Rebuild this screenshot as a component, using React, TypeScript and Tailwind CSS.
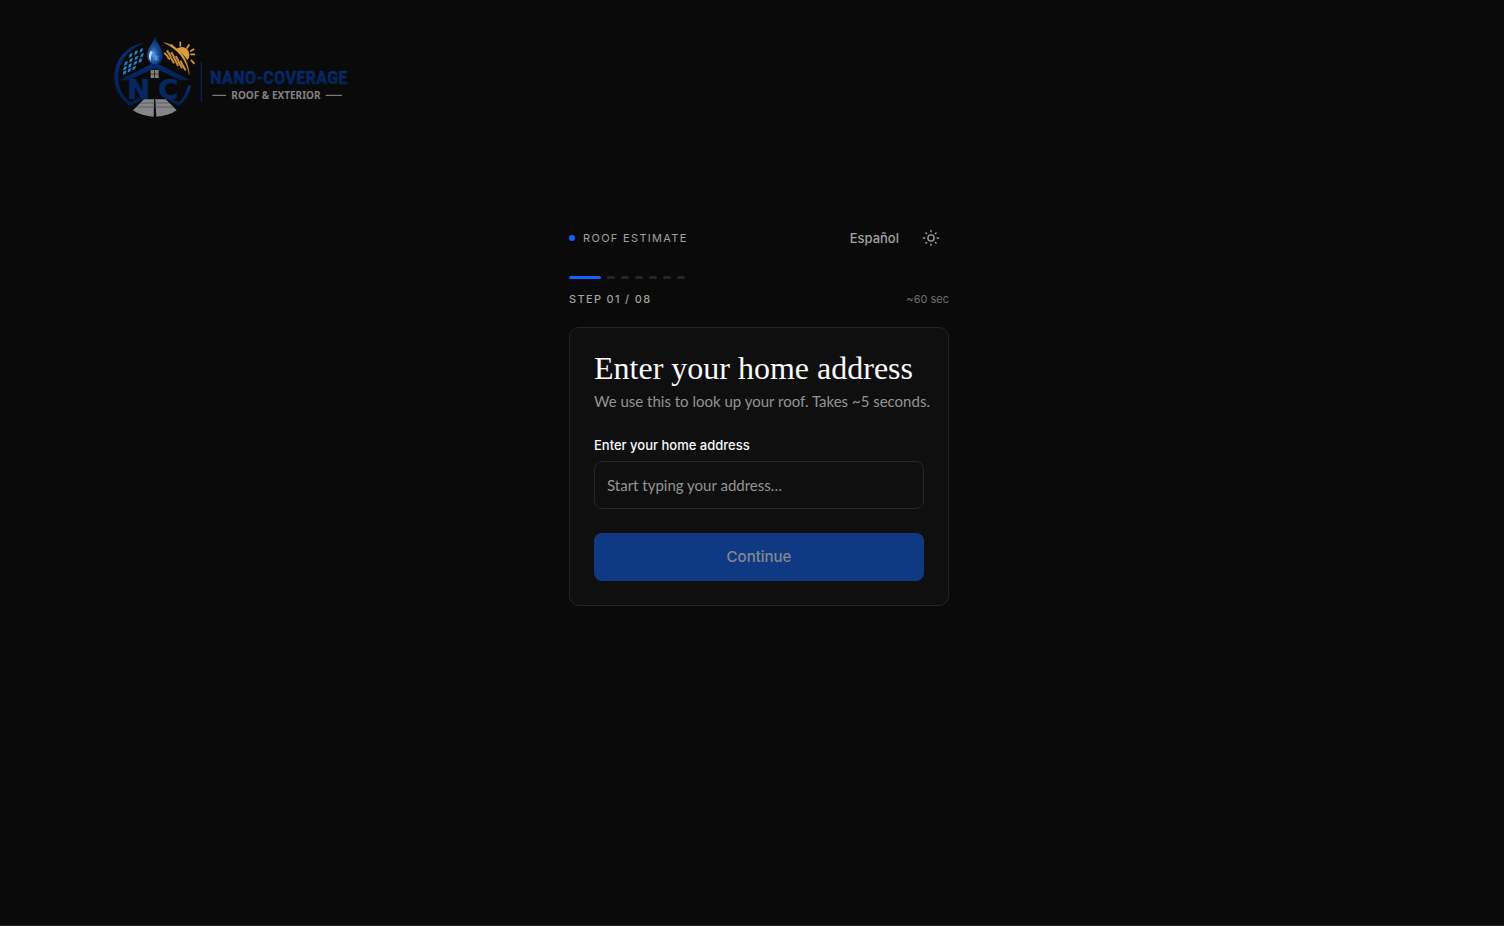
import React, { useState } from 'react';

const TOTAL_DOTS = 7;

const panelCells = [
  [110, 61], [94, 68], [78, 76],
  [112, 76], [95, 84], [79, 91], [64, 100],
  [107, 92], [92, 99], [76, 107], [61, 115],
  [88, 114], [74, 121], [60, 128],
];

const Logo: React.FC = () => (
  <svg viewBox="21 0 729 285" role="img" aria-label="Nano-Coverage Roof & Exterior" className="block h-[95px] w-[243px]">
    <defs>
      <linearGradient id="navy" x1="0" y1="0" x2="0" y2="1">
        <stop offset="0" stopColor="#082f75" />
        <stop offset="1" stopColor="#041d4e" />
      </linearGradient>
      <radialGradient id="drop" cx="0.4" cy="0.65" r="0.6">
        <stop offset="0" stopColor="#5d9be0" />
        <stop offset="0.45" stopColor="#17519f" />
        <stop offset="1" stopColor="#06265f" />
      </radialGradient>
    </defs>

    {/* ring */}
    <path d="M118 40C62 46 27 92 28 145c1 36 20 64 48 83l42-23H98l-21 12C55 202 40 177 40 145c0-50 32-92 78-105Z" fill="url(#navy)" />
    <path d="M258 165c-4 28-17 48-37 63l-40-23h18l21 12c16-13 24-28 28-49Z" fill="url(#navy)" />

    {/* solar panel */}
    {panelCells.map(([x, y]) => (
      <path key={`${x}-${y}`} d={`M${x - 4} ${y - 4}l9-3-3 10-9 4Z`} fill="#2482c4" />
    ))}

    {/* sun */}
    <path d="M213 58a21 21 0 1 1 34 32c-9-14-20-24-34-32Z" fill="#dc9c3d" />
    <g stroke="#dc9c3d" strokeWidth="5" strokeLinecap="round">
      <path d="M226 37v11M200 45l5 8M252 45l-6 9M266 58l-9 5M268 73h-10M259 91l8 9" />
    </g>
    <path d="M177 38c44 8 72 45 76 96-9-44-32-76-76-96Z" fill="#dc9c3d" stroke="#dc9c3d" strokeWidth="1" />
    <g stroke="#c98d35" strokeWidth="6" fill="none">
      <path d="M178 68c3 7 8 6 10 12s5 6 7 8" />
      <path d="M186 61c3 9 8 9 10 17s7 12 11 22" />
      <path d="M199 66c3 9 7 10 9 18s8 12 11 24" />
      <path d="M213 78c2 8 6 10 8 17s7 12 10 20" />
      <path d="M227 92c1 8 5 9 7 15s5 8 8 14" />
    </g>

    {/* roof */}
    <path d="M43 151 149 97l107 54h-31l-76-37-77 37Z" fill="url(#navy)" />
    <path d="M150 19c6 22 24 37 24 59a24 25 0 0 1-48 0c0-22 18-37 24-59Z" fill="url(#drop)" />
    <path d="M137 62c-8 13-6 25 1 31-1-9 0-20 6-26Z" fill="#c4ddf6" />
    <path d="M154 75v18M146 79l16 10M162 79l-16 10M150 78l4 3 4-3M150 91l4-3 4 3" stroke="#83b9ed" strokeWidth="1.5" fill="none" />
    <path d="M137 120h11v11h-11ZM150 120h11v11h-11ZM137 133h11v11h-11ZM150 133h11v11h-11Z" fill="#818181" />

    <text x="67 160" y="208" fill="#06285f" stroke="#06285f" strokeWidth="2" className="font-['DejaVu_Sans'] text-[82px] font-bold">NC</text>

    {/* driveway */}
    <path d="M117 208h30l-1 52c-23-1-45-7-62-19Z" fill="#85868a" />
    <path d="M151 208h31l33 33c-17 12-39 18-61 19Z" fill="#85868a" />
    <path d="M106 219h87M95 231h110" stroke="#4b4c50" strokeWidth="2" />

    <path d="M289 96v119" stroke="#052258" strokeWidth="4" />
    <text x="315" y="162" fill="url(#navy)" stroke="#06285f" strokeWidth="1" className="font-['Roboto_Condensed','Roboto'] text-[57px] font-bold">NANO-COVERAGE</text>
    <path d="M322 196h41M662 196h49" stroke="#77787a" strokeWidth="4" />
    <text x="379" y="208" fill="#818284" className="font-['Noto_Sans'] text-[30px] font-bold">ROOF &amp; EXTERIOR</text>
  </svg>
);

const SunIcon: React.FC = () => (
  <svg viewBox="0 0 18 18" fill="none" stroke="currentColor" strokeWidth="1.4" strokeLinecap="round" className="h-[18px] w-[18px]" aria-hidden="true">
    <circle cx="9" cy="9" r="3.1" />
    <path d="M9 1.5v1.3M9 15.2v1.3M1.5 9h1.3M15.2 9h1.3M3.9 3.9l.7.7M13.4 13.4l.7.7M3.9 14.1l.7-.7M13.4 4.6l.7-.7" />
  </svg>
);

const Progress: React.FC = () => (
  <div>
    <div className="flex gap-1.5">
      {Array.from({ length: TOTAL_DOTS }, (_, i) => (
        <span key={i} className={i === 0 ? 'h-[3px] w-8 rounded-full bg-[#1463ff]' : 'h-[3px] w-2 rounded-full bg-[#262626]'} />
      ))}
    </div>
    <div className="mt-3 flex items-center justify-between text-[11px] leading-4">
      <span className="font-medium tracking-[0.12em] text-[#a1a1a1]">STEP 01 / 08</span>
      <span className="text-[#6f6f6f]">~60 sec</span>
    </div>
  </div>
);

const AddressForm: React.FC = () => {
  const [address, setAddress] = useState('');

  return (
    <form
      onSubmit={(e) => e.preventDefault()}
      className="mt-5 rounded-[10px] border border-[#242424] bg-[#0f0f0f] p-6"
    >
      <h1 className="font-['Liberation_Serif',serif] text-[32px] leading-8 font-normal whitespace-nowrap text-[#fafafa]">Enter your home address</h1>
      <p className="mt-[7px] font-['Lato',sans-serif] text-[15px] leading-5 whitespace-nowrap text-[#949494]">We use this to look up your roof. Takes ~5 seconds.</p>
      <label htmlFor="address" className="mt-6 block text-[13px] leading-5 font-medium text-[#fafafa]">Enter your home address</label>
      <input
        id="address"
        type="text"
        value={address}
        onChange={(e) => setAddress(e.target.value)}
        placeholder="Start typing your address…"
        className="mt-1.5 block h-12 w-full rounded-lg border border-[#262626] bg-transparent px-3 font-['Lato',sans-serif] text-[15px] text-[#fafafa] outline-none placeholder:text-[#949494]"
      />
      <button
        type="submit"
        disabled={!address}
        className="mt-6 h-12 w-full rounded-lg bg-[#1463ff] text-[15px] font-medium text-white disabled:bg-[#103984] disabled:text-[#858991]"
      >
        Continue
      </button>
    </form>
  );
};

const App: React.FC = () => (
  <div className="flex min-h-screen flex-col border-b border-[#292526] bg-[#0a0a0a] font-['Inter',sans-serif] text-white">
    <header className="px-6 pt-[30px] md:px-28">
      <a href="#" className="inline-block align-top"><Logo /></a>
    </header>

    <main className="mt-[93px] px-4 md:pr-0 md:pl-3.5">
      <div className="mx-auto w-full max-w-[380px]">
        <div className="mb-[18px] flex h-10 items-center justify-between">
          <div className="flex items-center gap-2">
            <span className="h-1.5 w-1.5 rounded-full bg-[#1463ff]" />
            <span className="text-[11px] leading-4 tracking-[0.12em] text-[#a1a1a1]">ROOF ESTIMATE</span>
          </div>
          <div className="flex items-center">
            <button type="button" className="px-3.5 text-[13px] leading-5 font-medium text-[#a1a1a1]">Español</button>
            <button type="button" aria-label="Switch theme" className="flex h-9 w-9 items-center justify-center text-[#a1a1a1]">
              <SunIcon />
            </button>
          </div>
        </div>
        <Progress />
        <AddressForm />
      </div>
    </main>
  </div>
);

export default App;
